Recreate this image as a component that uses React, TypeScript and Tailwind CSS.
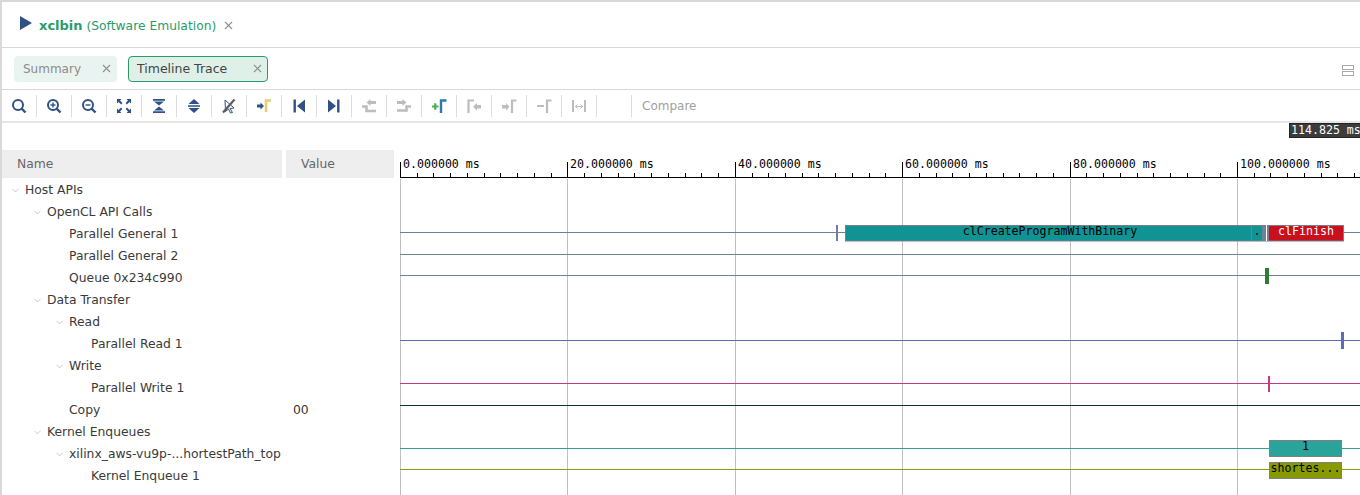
import type { ReactNode } from "react";
import { X, ChevronDown } from "lucide-react";

const navy = "#2f5183";
const gray = "#bdbdbd";

function Ico({ children }: { children: ReactNode }) {
  return (
    <svg width="16" height="16" viewBox="0 0 16 16" fill="none">
      {children}
    </svg>
  );
}

function Lens({ mark }: { mark?: "plus" | "minus" }) {
  return (
    <Ico>
      <circle cx="7" cy="7" r="5" stroke={navy} strokeWidth="2" />
      <path d="M10.5 10.5L14.5 14.5" stroke={navy} strokeWidth="2.4" />
      {mark && <path d="M4.5 7h5" stroke={navy} strokeWidth="1.4" />}
      {mark === "plus" && <path d="M7 4.5v5" stroke={navy} strokeWidth="1.4" />}
    </Ico>
  );
}

const icons: ReactNode[] = [
  <Lens key="a" />,
  <Lens key="b" mark="plus" />,
  <Lens key="c" mark="minus" />,
  <Ico key="d">
    <path d="M1 1h4.5L4 2.6l2.5 2.4-1.4 1.4L2.6 4 1 5.5zM15 1v4.5L13.400 4 11 6.400 9.600 5l2.400-2.400L10.500 1zM1 15v-4.500L2.600 12 5 9.600 6.400 11 4 13.400 5.500 15zM15 15h-4.500l1.500-1.600L9.600 11 11 9.600l2.400 2.400 1.600-1.500z" fill={navy} />
  </Ico>,
  <Ico key="e">
    <path d="M2 1h12v1.800H2zM2 13.200h12V15H2zM3 3.500h10L8 7.600zM3 12.500h10L8 8.400z" fill={navy} />
  </Ico>,
  <Ico key="f">
    <path d="M8 1l5.500 5h-11zM8 15l-5.500-5h11zM2 7.200h12v1.600H2z" fill={navy} />
  </Ico>,
  <Ico key="g">
    <path d="M4 2l9 8-4 .5 2.500 4-2 .5-2-4-3 2.500z" stroke={navy} strokeWidth="1" fill="none" />
    <path d="M2 14.500L13.500 1.500" stroke="#5c5c5c" strokeWidth="2.200" />
  </Ico>,
  <Ico key="h">
    <path d="M1 6.500h3.500V4.500L8 8l-3.500 3.500v-2H1z" fill={navy} />
    <path d="M10 14V2.500h5" stroke="#e6cf73" strokeWidth="2.600" />
  </Ico>,
  <Ico key="i">
    <path d="M2.500 1.500h2.400v13H2.500zM14 1.500v13L6 8z" fill={navy} />
  </Ico>,
  <Ico key="j">
    <path d="M11.100 1.500h2.400v13h-2.400zM2 1.500v13L10 8z" fill={navy} />
  </Ico>,
  <Ico key="k">
    <path d="M9.500 1L5.500 4.500 9.500 8V6h5.500V3H9.500z" fill={gray} />
    <path d="M1 8.500h4.500v4.500H15" stroke={gray} strokeWidth="2.600" />
  </Ico>,
  <Ico key="l">
    <path d="M6.500 1l4 3.500-4 3.500V6H1V3h5.500z" fill={gray} />
    <path d="M1 12.500h9.500V8.500H15" stroke={gray} strokeWidth="2.600" />
  </Ico>,
  <Ico key="m">
    <path d="M1 8.500h6.500M4.250 5.250v6.500" stroke="#4caf50" strokeWidth="2.200" />
    <path d="M10 15V2.500h5.500" stroke="#2e78ad" strokeWidth="2.400" />
  </Ico>,
  <Ico key="n">
    <path d="M2.500 15V2.500H8" stroke={gray} strokeWidth="2.200" />
    <path d="M15 7v3.500h-4v2L7 8.750 11 5v2z" fill={gray} />
  </Ico>,
  <Ico key="o">
    <path d="M1 7v3.500h4v2l3.500-3.750L5 5v2z" fill={gray} />
    <path d="M11 15V2.500h4.500" stroke={gray} strokeWidth="2.200" />
  </Ico>,
  <Ico key="p">
    <path d="M1 8h7" stroke={gray} strokeWidth="2" />
    <path d="M11 15V2.500h4.500" stroke={gray} strokeWidth="2.200" />
  </Ico>,
  <Ico key="q">
    <path d="M2 2v12M14 2v12" stroke={gray} strokeWidth="2" />
    <path d="M4 8.500h8M4.500 8.500l2-2M4.500 8.500l2 2M11.500 8.500l-2-2M11.500 8.500l-2 2" stroke={gray} strokeWidth="1" />
  </Ico>,
  <span key="r" />,
];

type Row = { label: string; level: number; open?: boolean; value?: string };

const rows: Row[] = [
  { label: "Host APIs", level: 0, open: true },
  { label: "OpenCL API Calls", level: 1, open: true },
  { label: "Parallel General 1", level: 2 },
  { label: "Parallel General 2", level: 2 },
  { label: "Queue 0x234c990", level: 2 },
  { label: "Data Transfer", level: 1, open: true },
  { label: "Read", level: 2, open: true },
  { label: "Parallel Read 1", level: 3 },
  { label: "Write", level: 2, open: true },
  { label: "Parallel Write 1", level: 3 },
  { label: "Copy", level: 2, value: "00" },
  { label: "Kernel Enqueues", level: 1, open: true },
  { label: "xilinx_aws-vu9p-...hortestPath_top", level: 2, open: true },
  { label: "Kernel Enqueue 1", level: 3 },
];

const indent = ["pl-[25px]", "pl-[47px]", "pl-[69px]", "pl-[91px]"];

const majors = [0, 1, 2, 3, 4, 5];
const minorCount = 60;
const mono = "'DejaVu Sans Mono', monospace";

// chart coordinates: svg starts at x=400, y=123
function Chart() {
  const mx = (n: number) => n * 167.4;
  const line = (y: number, color: string) => (
    <path d={`M0 ${y + 0.5}H960`} stroke={color} strokeWidth="1" />
  );
  return (
    <svg width="960" height="372" viewBox="0 0 960 372" className="block">
      {majors.map((m) => (
        <g key={m}>
          <path d={`M${Math.round(mx(m)) + 0.5} 39V54`} stroke="#000" />
          <path d={`M${Math.round(mx(m)) + 0.5} 56V372`} stroke="#c0c0c0" />
          <text x={Math.round(mx(m)) + 3} y={45} fontFamily={mono} fontSize="11.600" fill="#000">
            {(m * 20).toFixed(6)} ms
          </text>
        </g>
      ))}
      {Array.from({ length: minorCount }).map((_, i) => (
        <path key={i} d={`M${Math.round(i * 16.74) + 0.5} 50V54`} stroke="#000" />
      ))}
      <path d="M0 54.500H960" stroke="#000" />

      {line(109, "#6f8294")}
      {line(131, "#6f8294")}
      {line(152, "#6f8294")}
      {line(217, "#5b6bb5")}
      {line(260, "#c23a80")}
      {line(282, "#10303a")}
      {line(325, "#2aa39b")}
      {line(346, "#8a9a10")}

      <rect x="436" y="102" width="2" height="16" fill="#6f8294" />
      <rect x="445.500" y="102.500" width="422" height="15.500" fill="#129393" stroke="#77808a" />
      <path d="M851.500 102V118" stroke="#77808a" />
      <rect x="862" y="102" width="4" height="16" fill="#6f8294" />
      <rect x="866" y="102" width="1" height="16" fill="#ffffff" />
      <text x="650" y="112" textAnchor="middle" fontFamily={mono} fontSize="11.600" fill="#000">
        clCreateProgramWithBinary
      </text>
      <text x="857" y="112" textAnchor="middle" fontFamily={mono} fontSize="11.600" fill="#000">
        .
      </text>
      <rect x="868.500" y="102.500" width="75" height="15.500" fill="#c8101e" stroke="#77808a" />
      <text x="906" y="112" textAnchor="middle" fontFamily={mono} fontSize="11.600" fill="#fff">
        clFinish
      </text>

      <rect x="865" y="145" width="4" height="16" fill="#2e7d32" />
      <rect x="941" y="209" width="3" height="17" fill="#5b6bb5" />
      <rect x="868" y="253" width="2" height="16" fill="#c23a80" />

      <rect x="869.500" y="317.500" width="72" height="16" fill="#2aa39b" stroke="#808080" />
      <text x="905.500" y="327" textAnchor="middle" fontFamily={mono} fontSize="11.600" fill="#000">
        1
      </text>
      <rect x="869.500" y="339.500" width="72" height="16" fill="#889a00" stroke="#808080" />
      <text x="905.500" y="349" textAnchor="middle" fontFamily={mono} fontSize="11.600" fill="#000">
        shortes...
      </text>

      <rect x="889.500" y="0.500" width="80" height="14" fill="#3c3c3c" stroke="#222222" />
      <text x="891" y="11" fontFamily={mono} fontSize="11.600" fill="#fff">
        114.825 ms
      </text>
    </svg>
  );
}

export default function App() {
  return (
    <div className="w-[1360px] h-[495px] overflow-hidden bg-white border-t-2 border-l-2 border-[#d9d9d9] font-['DejaVu_Sans',sans-serif] text-[12.350px] text-[#333]">
      <div className="h-[46px] border-b border-[#d9d9d9] flex items-center pl-[18px]">
        <svg width="12" height="14" viewBox="0 0 12 14" className="mr-[7px] -mt-[3px]">
          <path d="M0 0L12 7L0 14z" fill={navy} />
        </svg>
        <span className="mt-[3px] text-[#2b9c69] text-[12.300px]">
          <span className="font-bold text-[13px]">xclbin</span> (Software Emulation)
        </span>
        <X size={13} strokeWidth={2} className="ml-[6px] mt-px text-[#8f8f8f]" />
      </div>

      <div className="h-[42px] border-b border-[#d9d9d9] flex items-center pl-[12px] relative">
        <div className="w-[103px] h-[26px] rounded-sm bg-[#e9f4f0] flex items-center justify-between pl-[9px] pr-[4px] text-[#8c8c8c]">
          <span className="mt-px text-[12px]">Summary</span>
          <X size={13} strokeWidth={2} className="text-[#8f8f8f]" />
        </div>
        <div className="ml-[11px] w-[140px] h-[26px] rounded-sm bg-[#dff0e9] border border-[#2b9c69] flex items-center justify-between pl-[8px] pr-[3px] text-[#444]">
          <span className="mt-px text-[12.500px]">Timeline Trace</span>
          <X size={13} strokeWidth={2} className="text-[#8f8f8f]" />
        </div>
        <div className="absolute right-[6px] top-[17px] flex flex-col gap-[1px]">
          <div className="w-[12px] h-[5px] border border-[#a8a8a8]" />
          <div className="w-[12px] h-[5px] border border-[#a8a8a8]" />
        </div>
      </div>

      <div className="h-[33px] border-b-2 border-[#e6e6e6] flex items-center">
        {icons.map((icon, i) => (
          <div key={i} className="w-[35px] h-[22px] shrink-0 flex items-center justify-center pr-px border-r border-[#dcdcdc]">
            {icon}
          </div>
        ))}
        <span className="ml-[10px] mt-px text-[12px] text-[#a0a0a0]">Compare</span>
      </div>

      <div className="flex">
        <div className="w-[398px] shrink-0 pt-[27px]">
          <div className="flex h-[28px] gap-[4px] text-[#666]">
            <div className="w-[280px] bg-[#eeeeee] flex items-center pl-[15px]">Name</div>
            <div className="w-[108px] bg-[#eeeeee] flex items-center pl-[15px]">Value</div>
          </div>
          {rows.map((r) => (
            <div key={r.label} className={`relative h-[22px] flex items-center ${indent[r.level]}`}>
              {r.open && (
                <ChevronDown
                  size={11}
                  strokeWidth={1.400}
                  className={`absolute mt-[2px] text-[#aaaaaa] ${["left-[8px]", "left-[30px]", "left-[52px]", "left-[74px]"][r.level]}`}
                />
              )}
              <span className="-ml-[2px] mt-[3px] whitespace-nowrap text-[#3a3a3a]">{r.label}</span>
              {r.value && <span className="absolute left-[291px] mt-[3px]">{r.value}</span>}
            </div>
          ))}
        </div>
        <Chart />
      </div>
    </div>
  );
}
